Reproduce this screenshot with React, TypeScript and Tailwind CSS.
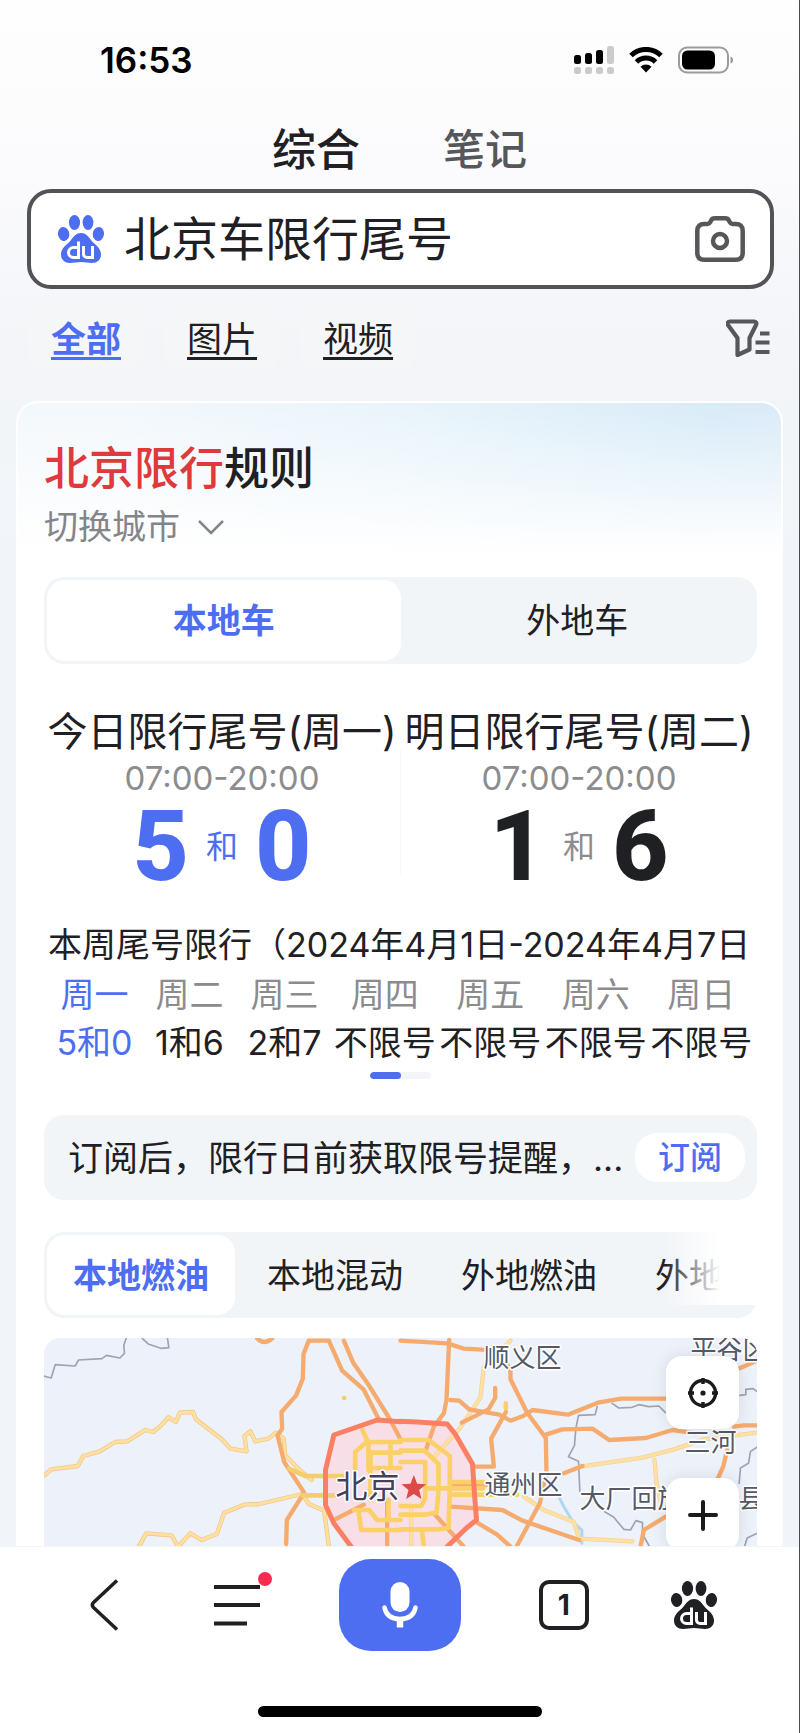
import type { ReactNode } from "react";

const WEEK = [
  { day: "周一", rule: "5和0" },
  { day: "周二", rule: "1和6" },
  { day: "周三", rule: "2和7" },
  { day: "周四", rule: "不限号" },
  { day: "周五", rule: "不限号" },
  { day: "周六", rule: "不限号" },
  { day: "周日", rule: "不限号" },
];

const CAR_TYPES = ["本地燃油", "本地混动", "外地燃油", "外地混动"];

const PawIcon = ({ className }: { className: string }) => (
  <svg viewBox="0 0 46 48" className={className} fill="currentColor">
    <ellipse cx="16.500" cy="7.500" rx="5.600" ry="7.500" />
    <ellipse cx="30" cy="7.500" rx="5.400" ry="7.500" />
    <ellipse cx="5.600" cy="19" rx="5.600" ry="7" transform="rotate(-8 5.600 19)" />
    <ellipse cx="40.400" cy="19" rx="5.600" ry="7" transform="rotate(8 40.400 19)" />
    <path d="M23 18c4.600 0 7.500 3.500 10 7 3.500 4.500 10 7.500 10 14.500 0 5.500-4 8.500-9 8.500-4 0-7-1-11-1s-7 1-11 1c-5 0-9-3-9-8.500C3 32.500 9.500 29.500 13 25c2.500-3.500 5.400-7 10-7z" />
    <g fill="none" stroke="#fff" strokeWidth="3">
      <path d="M20.500 26.500V44M20.500 32.500h-5a5 5 0 0 0-5 5a5 5 0 0 0 5 5h5" />
      <path d="M25.500 31v8a3.500 3.500 0 0 0 3.500 3.500h5.500V31" />
    </g>
  </svg>
);

const StatusBar = () => (
  <div className="flex h-[118px] items-center justify-between pt-[2px] pr-[65px] pl-[100px]">
    <span className="font-[Inter,sans-serif] text-[35px] leading-10 font-semibold text-black">
      16:53
    </span>
    <div className="flex items-center gap-[15px]">
      <svg viewBox="0 0 40 28" className="h-7 w-10">
        <g fill="#000">
          <rect x="0" y="9" width="7" height="9" rx="2.500" />
          <rect x="11" y="7" width="7" height="11" rx="2.500" />
          <rect x="22" y="4" width="7" height="14" rx="2.500" />
        </g>
        <g fill="#cbcbcb">
          <rect x="33" y="0" width="7" height="18" rx="2.500" />
          <rect x="0" y="21" width="7" height="7" rx="2.500" />
          <rect x="11" y="21" width="7" height="7" rx="2.500" />
          <rect x="22" y="21" width="7" height="7" rx="2.500" />
          <rect x="33" y="21" width="7" height="7" rx="2.500" />
        </g>
      </svg>
      <svg viewBox="0 0 34 26" className="h-[26px] w-[34px]">
        <path d="M2 8.500a21.500 21.500 0 0 1 30 0" fill="none" stroke="#000" strokeWidth="5" />
        <path d="M7.500 15a13.500 13.500 0 0 1 19 0" fill="none" stroke="#000" strokeWidth="5" />
        <path d="M17 25.500l-5.500-5.800a8 8 0 0 1 11 0z" fill="#000" />
      </svg>
      <svg viewBox="0 0 56 28" className="h-7 w-14">
        <rect x="1" y="1.500" width="49" height="25" rx="8" fill="none" stroke="#9b9b9b" strokeWidth="2" />
        <rect x="4" y="4.500" width="33" height="19" rx="5.500" fill="#000" />
        <path d="M52.500 10.500c3.500 1 3.500 6 0 7z" fill="#9b9b9b" />
      </svg>
    </div>
  </div>
);

const SearchHeader = () => (
  <header>
    <nav className="flex h-[71px] justify-center gap-[83px] pt-[2px] leading-[60px]">
      <a href="#all" className="text-[44px] font-medium text-[#1f2023]">
        综合
      </a>
      <a href="#notes" className="text-[42px] font-medium text-[#55575b]">
        笔记
      </a>
    </nav>
    <form className="mr-[25px] ml-[27px] flex h-[100px] items-center rounded-[24px] border-4 border-[#525356] bg-white pr-[25px] pl-[27px]">
      <PawIcon className="h-12 w-[46px] shrink-0 text-[#4e6ef2]" />
      <input
        aria-label="搜索"
        defaultValue="北京车限行尾号"
        className="ml-[20px] h-16 min-w-0 flex-1 bg-transparent text-[47px] text-[#1f2023] outline-none"
      />
      <button type="button" aria-label="拍照搜索">
        <svg viewBox="0 0 50 46" className="h-[46px] w-[50px]" fill="none" stroke="#55575b" strokeWidth="4.500">
          <path d="M9 8h3.500c1.500 0 2-.6 2.700-1.800l1-1.900C17 2.800 18 2.300 19.800 2.300h10.400c1.800 0 2.800.5 3.600 2l1 1.900c.7 1.200 1.200 1.800 2.700 1.800H41c4 0 6.700 2.500 6.700 6.500V37c0 4.500-2.500 6.700-6.700 6.700H9c-4.500 0-6.700-2.200-6.700-6.700V14.500C2.300 10.500 5 8 9 8z" />
          <circle cx="25" cy="25" r="7" />
        </svg>
      </button>
    </form>
    <div className="flex h-[112px] items-start justify-between pt-[21px] pr-[29px] pl-[28px]">
      <nav className="flex gap-5 text-[35px] leading-[58px] text-[#1f2023]">
        {["全部", "图片", "视频"].map((label, i) => (
          <a
            key={label}
            href={`#tab-${i}`}
            className={`rounded-xl bg-[#f5f6f8] px-[23px] underline decoration-[3px] underline-offset-[5px] ${
              i === 0 ? "font-bold text-[#4e6ef2]" : ""
            }`}
          >
            {label}
          </a>
        ))}
      </nav>
      <button type="button" aria-label="筛选" className="mt-[9px]">
        <svg viewBox="0 0 44 38" className="h-[38px] w-11" fill="none" stroke="#55575b" strokeWidth="4.200">
          <path d="M4 2.500h24c2 0 3 1.700 2 3.500L23.500 19v11.500l-12 5.500V19L2 6C1 4.200 2 2.500 4 2.500z" strokeLinejoin="round" />
          <path d="M34 14.500h9.500M29.500 23.500h14M29.500 33h14" />
        </svg>
      </button>
    </div>
  </header>
);

interface DayRuleProps {
  title: string;
  first: string;
  second: string;
  today?: boolean;
}

const DayRule = ({ title, first, second, today }: DayRuleProps) => (
  <div className="flex-1 text-center whitespace-nowrap">
    <h3 className="text-[40px] leading-[56px] text-[#1f2023]">{title}</h3>
    <p className="font-[Inter,sans-serif] text-[33px] leading-9 text-[#8c8c8f]">
      07:00-20:00
    </p>
    <div
      className={`flex h-[102px] items-center justify-center gap-[17px] ${
        today ? "text-[#4e6ef2]" : "text-[#1f2023]"
      }`}
    >
      <span className="font-[Roboto,sans-serif] text-[98px] leading-[102px] font-extrabold">
        {first}
      </span>
      <span className={`text-[32px] ${today ? "" : "text-[#8c8c8f]"}`}>和</span>
      <span className="font-[Roboto,sans-serif] text-[98px] leading-[102px] font-extrabold">
        {second}
      </span>
    </div>
  </div>
);

const WeekTable = () => (
  <section>
    <h3 className="pl-1 text-[34px] leading-[52px] whitespace-nowrap text-[#1f2023]">
      本周尾号限行（2024年4月1日-2024年4月7日
    </h3>
    <table className="mx-auto w-[calc(100%-6px)] text-center text-[34px] leading-[48px] whitespace-nowrap text-[#1f2023]">
      <thead>
        <tr className="text-[#8c8c8f]">
          {WEEK.map(({ day }, i) => (
            <th
              key={day}
              scope="col"
              className={`p-0 font-normal ${i < 3 ? "w-[95px]" : ""} ${
                i === 0 ? "text-[#4e6ef2]" : ""
              }`}
            >
              {day}
            </th>
          ))}
        </tr>
      </thead>
      <tbody>
        <tr>
          {WEEK.map(({ day, rule }, i) => (
            <td key={day} className={`p-0 ${i === 0 ? "text-[#4e6ef2]" : ""}`}>
              {rule}
            </td>
          ))}
        </tr>
      </tbody>
    </table>
    <div className="mx-auto mt-[5px] flex h-[7px] w-[61px] overflow-hidden rounded-full bg-[#f3f5f8]">
      <div className="w-1/2 rounded-full bg-[#4e6ef2]" />
    </div>
  </section>
);

const MapButton = ({ label, children }: { label: string; children: ReactNode }) => (
  <button
    type="button"
    aria-label={label}
    className="flex size-[73px] items-center justify-center rounded-[16px] bg-white shadow-[0_0_16px_rgba(0,0,0,0.1)]"
  >
    {children}
  </button>
);

const TrafficMap = () => (
  <div className="relative mt-[20px] h-[208px] overflow-hidden rounded-t-[16px] bg-[#edf1fa]">
    <svg viewBox="0 0 714 208" preserveAspectRatio="xMidYMin slice" className="size-full">
      <g fill="none" strokeLinejoin="round" strokeLinecap="round">
        {/* area inside the restricted ring */}
        <path d="M282 132L290 97 334 83 404 86 429 127 432 182 404 208H308L282 169z" fill="#f8dfe7" />
        {/* west half */}
        <g transform="translate(-43 -18) scale(.33333)">
          <g stroke="#9ca3b3" strokeWidth="5">
            <path d="M130 168l22 6 12-40 60 4 10-18 70-4 14-10 40 8 14-14-2-24 8-24M425 55l20 18 36 12 24-2-4-28" />
          </g>
          <g stroke="#f3c385" strokeWidth="13">
            <path d="M132 466l20-18 80-10 16-30 50-14 46-28 36-2 54-34 24 6 24-20 22-24 22 14 12-28 40-2 8 22 78 60 26 28 48 8-6-46 18-14 14 30 40-8 22-18 24 18 4 50 50 50 30 24" />
            <path d="M415 680l22-40 76 6 20 34 36-40 34 20 46-18 22-64 60-24 46-2 128-30 20 30 46 20 14 106" />
          </g>
          <g stroke="#fddf9f" strokeWidth="9">
            <path d="M132 466l20-18 80-10 16-30 50-14 46-28 36-2 54-34 24 6 24-20 22-24 22 14 12-28 40-2 8 22 78 60 26 28 48 8-6-46 18-14 14 30 40-8 22-18 24 18 4 50 50 50 30 24" />
            <path d="M415 680l22-40 76 6 20 34 36-40 34 20 46-18 22-64 60-24 46-2 128-30 20 30 46 20 14 106" />
          </g>
          <g stroke="#f5aa6e" strokeWidth="13">
            <path d="M770 55q20 22 45 0M925 62l-16 40-2 74-20 50-44 50 2 50-14 20 20 80 60 92-52 82-2 72M925 62h60l40 90 64 56 46 90M1030 62l28 66 42 60 66 106 34 64" />
            <path d="M1000 600l90-46M1160 540v140" />
          </g>
          <g stroke="#fbd067" strokeWidth="14">
            <path d="M865 446l50 22h120M905 526h110" stroke="#f3cf6b" />
            <path d="M1086 330l18 40v80M1064 448v-52l34-30h102M1112 398h88M1120 444h80M1060 570h46l24 30h70M1074 574l8 56h118M1110 400v140M1164 540v60M1170 370v70" />
          </g>
          <path d="M1200 305L1130 300 1000 345 975 450 975 555 1000 610 1052 680" stroke="#fb8063" strokeWidth="15" />
          <circle cx="1031" cy="234" r="7" fill="#efd064" />
        </g>
        {/* east half */}
        <g transform="translate(357 -18) scale(.33333)">
          <path d="M470 520l20 40 30 50 24 20v40" stroke="#aed7ee" strokeWidth="9" />
          <g stroke="#9ca3b3" strokeWidth="5">
            <path d="M635 250l20 14 40-2 20-8 30 6 30-2 20 20M590 260l-6 24-50 2-8 40-4 50-18 34 30 14 4 90M600 568l40 24 30 36 20 2 16-28 20 6v34l20 36M1018 226l18-2v-16l22-2 14 10M1072 380l-22 14-6 36-24 14-4 46M1070 640l-30 14-8 26" />
          </g>
          <g stroke="#f6cf91" strokeWidth="13">
            <path d="M330 62l-80 80-10 90-60 90-80 90M540 440l190-28 90-24 90-30 160-20M762 420l6 70 14 60M370 530l60 40 90 36 16 50 160 8M32 560v120" />
          </g>
          <g stroke="#fde1a4" strokeWidth="9">
            <path d="M330 62l-80 80-10 90-60 90-80 90M540 440l190-28 90-24 90-30 160-20M762 420l6 70 14 60M370 530l60 40 90 36 16 50 160 8M32 560v120" />
          </g>
          <g stroke="#f5aa6e" strokeWidth="13">
            <path d="M0 62l140 8 50 16 110 6 30 60v26l50 100 56 76 2 106-20 90-70 130M146 60l-8 180-8 40-30 40-24 70" />
            <path d="M150 240l26 2 30 26 90 16 34 18 38-14 28-18 106 14 90-36 70-12h134M436 344l50-16 90-2 50 34 110-6 80-24 70 10M1000 320l30-4h40M1014 146l56-24" />
            <path d="M284 204v30l-20 34-80 40M316 276l-44 80 8 84h-60M490 460l56-22M980 390l-12 50-18 40M150 560l156 10 60 32 170 58M230 608l60 36 40 36M720 680l10-50 66-40M100 580l90 100M156 495h110" />
          </g>
          <g stroke="#fbd067" strokeWidth="14">
            <path d="M0 360H84l64 48v90l-4 126-34 4H0M0 392h72l42 40v80l-6 66-34 6H0M0 426h74v110l-12 22H0M78 505h170M150 486h100M150 524h200M64 630l6 50M316 250v14" />
          </g>
          <path d="M-4 304l54 2 90 6 24 30 52 90 6 90 6 78-30 24-60 58" stroke="#fb8063" strokeWidth="15" />
          <path d="M40 465l10 26 27 2-21 17 7 27-23-15-23 15 7-27-21-17 27-2z" fill="#dc4a48" />
        </g>
      </g>
      <g fill="#555a66" fontSize="26" stroke="#fff" strokeWidth="3" paintOrder="stroke" strokeLinejoin="round">
        <text x="440" y="29">顺义区</text>
        <text x="647" y="21">平谷区</text>
        <text x="641" y="114">三河</text>
        <text x="441" y="156">通州区</text>
        <text x="536" y="170">大厂回族</text>
        <text x="695" y="170">县</text>
        <text x="292" y="160" fontSize="32" fill="#46405a">北京</text>
      </g>
    </svg>
    <div className="absolute top-[18px] right-[18px] flex flex-col gap-[49px]">
      <MapButton label="定位">
        <svg viewBox="0 0 32 32" className="size-8" fill="none" stroke="#1b1b1d" strokeWidth="3.400">
          <circle cx="16" cy="16" r="12.500" />
          <path d="M16 1v6M16 25v6M1 16h6M25 16h6" />
          <circle cx="16" cy="16" r="2.600" fill="#1b1b1d" stroke="none" />
        </svg>
      </MapButton>
      <MapButton label="放大">
        <svg viewBox="0 0 32 32" className="size-8" fill="none" stroke="#1b1b1d" strokeWidth="4" strokeLinecap="round">
          <path d="M16 3v27M3 16h26" />
        </svg>
      </MapButton>
    </div>
  </div>
);

const RuleCard = () => (
  <main className="mr-[16px] ml-4 flex-1 rounded-t-[22px] border-2 border-b-0 border-white bg-white bg-[linear-gradient(to_bottom,transparent,#ffffff_150px),linear-gradient(100deg,#f3f8fc_10%,#e8f4fb_40%,#d8ebf8_72%,#dde9f6_95%)] pt-[34px] pr-[24px] pl-[26px]">
    <h2 className="text-[45px] leading-[64px] font-medium text-[#1f2023]">
      <em className="text-[#de3a3b] not-italic">北京限行</em>规则
    </h2>
    <button type="button" className="flex items-center gap-[17px] text-[34px] leading-[52px] text-[#858589]">
      切换城市
      <svg viewBox="0 0 28 16" className="h-4 w-7" fill="none" stroke="currentColor" strokeWidth="2.500">
        <path d="M2 2l12 12L26 2" />
      </svg>
    </button>

    <div className="mt-[24px] flex h-[87px] rounded-[20px] bg-[#f2f5f8] p-[3px] text-[34px] text-[#1f2023]">
      <button type="button" className="flex-1 rounded-[18px] bg-white font-bold text-[#4e6ef2]">
        本地车
      </button>
      <button type="button" className="flex-1">
        外地车
      </button>
    </div>

    <div className="mt-[40px] flex">
      <DayRule title="今日限行尾号(周一)" first="5" second="0" today />
      <div className="mt-[46px] mb-[24px] w-px bg-[#f5f6f8]" />
      <DayRule title="明日限行尾号(周二)" first="1" second="6" />
    </div>

    <div className="mt-[21px]">
      <WeekTable />
    </div>

    <div className="mt-[36px] flex h-[85px] items-center justify-between rounded-[20px] bg-[#f2f5f8] pr-3 pl-6 whitespace-nowrap">
      <p className="text-[35px] leading-[52px] text-[#1f2023]">
        订阅后，限行日前获取限号提醒，...
      </p>
      <button type="button" className="h-[49px] w-[110px] shrink-0 rounded-[22px] bg-white text-[32px] leading-[49px] font-medium text-[#4e6ef2]">
        订阅
      </button>
    </div>

    <div className="relative mt-[32px] flex h-[86px] overflow-hidden rounded-[20px] bg-[#f2f5f8] p-[3px] text-[34px] whitespace-nowrap text-[#1f2023]">
      {CAR_TYPES.map((type, i) => (
        <button
          key={type}
          type="button"
          className={`shrink-0 ${
            i === 0
              ? "mr-[3px] w-[188px] rounded-[18px] bg-white font-bold text-[#4e6ef2]"
              : "w-[194px]"
          }`}
        >
          {type}
        </button>
      ))}
      <div className="absolute top-0 right-0 h-[73px] w-[92px] bg-linear-to-r from-white/0 to-white to-60%" />
    </div>

    <TrafficMap />
  </main>
);

const BottomBar = () => (
  <footer className="h-[187px] border-t border-[#f4f4f5] bg-white">
    <div className="flex h-[116px] items-center justify-between pr-[82px] pl-[89px]">
      <button type="button" aria-label="返回" className="pr-[17px]">
        <svg viewBox="0 0 30 52" className="h-[52px] w-[30px]" fill="none" stroke="#1f2023" strokeWidth="3.500">
          <path d="M28 1.500L4.500 23.500q-2.500 2.500 0 5L28 50.500" />
        </svg>
      </button>
      <button type="button" aria-label="菜单" className="relative">
        <svg viewBox="0 0 46 42" className="h-[42px] w-[46px]">
          <path d="M0 3h46M0 21h46M0 39.500h33" stroke="#1f2023" strokeWidth="4" />
        </svg>
        <span className="absolute -top-3 -right-3 size-[14px] rounded-full bg-[#fb2b50]" />
      </button>
      <button type="button" aria-label="语音搜索" className="flex h-[92px] w-[122px] items-center justify-center rounded-[32px] bg-[#4e6ef2]">
        <svg viewBox="0 0 36 46" className="h-[46px] w-9">
          <rect x="8.500" y="0" width="19" height="30" rx="9.500" fill="#fff" />
          <path d="M2.500 25.500c1.500 8 7.500 11.500 15.500 11.500s14-3.500 15.500-11.500" fill="none" stroke="#fff" strokeWidth="4.500" strokeLinecap="round" />
          <path d="M18 37v8.500" stroke="#fff" strokeWidth="6.500" />
        </svg>
      </button>
      <button type="button" aria-label="标签页" className="mr-1 size-[50px] rounded-[10px] border-4 border-[#1f2023] text-[28px] leading-none font-bold text-[#1f2023]">
        1
      </button>
      <button type="button" aria-label="百度首页">
        <PawIcon className="h-12 w-[46px] text-[#1f2023]" />
      </button>
    </div>
    <div className="mx-auto mt-[43px] h-[11px] w-[284px] rounded-full bg-black" />
  </footer>
);

export default function App() {
  return (
    <div className="flex min-h-screen flex-col border-r border-[#4a4b4d] bg-[#f1f5f9] bg-[linear-gradient(to_bottom,#fefefe,#fbfbfd_170px,#f3f5f8_340px,#f1f5f9_600px)] font-[Inter,'Noto_Sans_CJK_SC',sans-serif]">
      <StatusBar />
      <SearchHeader />
      <RuleCard />
      <BottomBar />
    </div>
  );
}
